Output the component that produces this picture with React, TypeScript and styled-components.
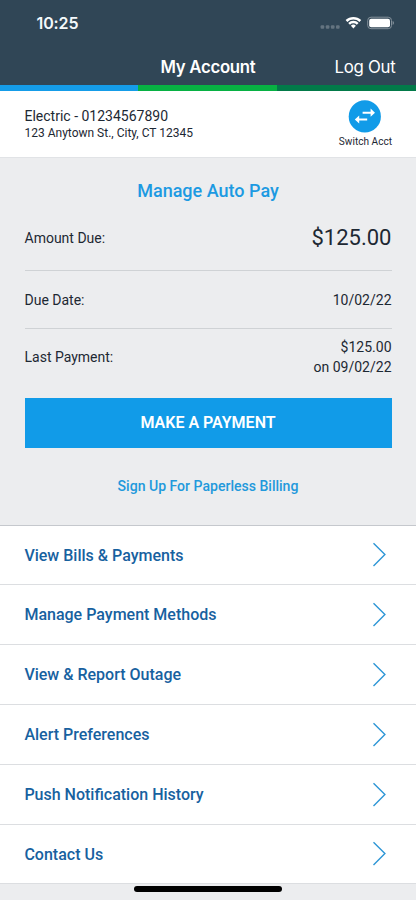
import React from "react";
import styled, { createGlobalStyle } from "styled-components";

const GlobalStyle = createGlobalStyle`
  * { box-sizing: border-box; }
  body {
    margin: 0;
    background: #ecedef;
    font-family: Roboto, "Liberation Sans", sans-serif;
    color: #1d2833;
  }
  button { font: inherit; border: 0; padding: 0; background: none; cursor: pointer; }
`;

const Screen = styled.div`
  width: 100%;
  height: 900px;
  display: flex;
  flex-direction: column;
  overflow: hidden;
  background: #ecedef;
`;

const Header = styled.header`
  flex: none;
  height: 85px;
  background: #304656;
  color: #fff;
  font-family: Inter, sans-serif;
`;

const StatusBar = styled.div`
  height: 46px;
  padding: 0 22px 0 36.5px;
  display: flex;
  align-items: center;
  justify-content: space-between;
`;

const Clock = styled.span`
  font-size: 16px;
  font-weight: 600;
  letter-spacing: -0.1px;
  color: #f4f9fc;
`;

const NavBar = styled.div`
  height: 42px;
  padding: 0 20.5px;
  display: grid;
  grid-template-columns: 1fr auto 1fr;
  align-items: center;
`;

const NavTitle = styled.h1`
  grid-column: 2;
  margin: 0;
  font-size: 16.8px;
  font-weight: 600;
  letter-spacing: -0.3px;
`;

const LogOut = styled.button`
  justify-self: end;
  color: #fff;
  font-size: 16.8px;
  letter-spacing: -0.25px;
`;

const Stripe = styled.div`
  flex: none;
  height: 6px;
  display: grid;
  grid-template-columns: 138.4px 138.6px 1fr;
`;

const StripePart = styled.span<{ $color: string }>`
  background: ${(p) => p.$color};
`;

const Account = styled.section`
  flex: none;
  height: 67px;
  padding: 9px 24px 0 24.5px;
  display: flex;
  justify-content: space-between;
  background: #fff;
  border-bottom: 1px solid #e1e3e6;
`;

const AccountInfo = styled.div`
  padding-top: 7px;
`;

const AccountNumber = styled.div`
  font-size: 14px;
  line-height: 18px;
`;

const Address = styled.div`
  font-size: 12px;
  line-height: 16px;
`;

const SwitchAccount = styled.button`
  display: flex;
  flex-direction: column;
  align-items: center;
  align-self: flex-start;
  color: #1d2833;
  font-size: 10.1px;
  line-height: 12px;
  gap: 1.5px;
`;

const Summary = styled.section`
  flex: none;
  height: 367px;
  padding: 0 24.5px;
  display: flex;
  flex-direction: column;
`;

const AutoPay = styled.button`
  height: 46px;
  margin-bottom: 1px;
  padding-top: 19px;
  line-height: 26px;
  color: #1c9ae2;
  font-size: 18px;
  font-weight: 500;
`;

const Row = styled.div<{ $height: number; $last?: boolean }>`
  height: ${(p) => p.$height}px;
  display: flex;
  align-items: center;
  justify-content: space-between;
  font-size: 14px;
  border-bottom: ${(p) => (p.$last ? "0" : "1px solid #cfd2d5")};
`;

const Value = styled.span<{ $large?: boolean }>`
  text-align: right;
  font-size: ${(p) => (p.$large ? "22px" : "14px")};
  line-height: ${(p) => (p.$large ? "26px" : "20px")};
`;

const PayButton = styled.button`
  flex: none;
  height: 50px;
  margin-top: 13px;
  padding-bottom: 1px;
  background: #119be8;
  color: #fff;
  font-size: 16px;
  font-weight: 600;
`;

const Paperless = styled.button`
  margin-top: 28px;
  line-height: 20px;
  align-self: center;
  color: #2299dc;
  font-size: 14.05px;
  font-weight: 500;
`;

const Menu = styled.nav`
  flex: none;
  background: #fff;
  border-top: 1px solid #c5c8cd;
`;

const MenuItem = styled.button`
  width: 100%;
  height: 60px;
  padding: 0 30px 0 24.4px;
  display: flex;
  align-items: center;
  justify-content: space-between;
  color: #17619f;
  font-size: 16px;
  font-weight: 500;
  border-bottom: 1px solid #dcdee1;

  &:first-child,
  &:last-child {
    height: 59px;
  }
`;

const Footer = styled.footer`
  flex: 1;
  display: flex;
  justify-content: center;
  padding-top: 2.4px;
`;

const HomeIndicator = styled.div`
  width: 148px;
  height: 5.2px;
  border-radius: 3px;
  background: #000;
`;

const StatusIcons = () => (
  <svg width="76" height="16" viewBox="0 0 76 16" fill="#fff">
    <g fill="#647480">
      <rect x="2.6" y="10.2" width="3.6" height="3.6" rx="1" />
      <rect x="7.8" y="10.2" width="3.6" height="3.6" rx="1" />
      <rect x="12.9" y="10.2" width="3.6" height="3.6" rx="1" />
      <rect x="18" y="10.2" width="3.6" height="3.6" rx="1" />
    </g>
    <g transform="translate(27.4 1.4)">
      <path d="M.2 3.7a11.2 11.2 0 0 1 15.6 0L14.1 5.6a8.8 8.8 0 0 0-12.2 0Z" />
      <path d="M2.8 6.5a7.4 7.4 0 0 1 10.4 0L11.4 8.3a4.9 4.9 0 0 0-6.8 0Z" />
      <path d="M5.5 9.3a3.6 3.6 0 0 1 5 0L8 12.1Z" />
    </g>
    <rect x="49.7" y="2.2" width="23.8" height="11.5" rx="3.3" fill="none" stroke="#83909a" strokeWidth="1" />
    <rect x="51.2" y="3.7" width="20.8" height="8.5" rx="2" />
    <path d="M74.6 6.1c1.8.5 1.8 3.3 0 3.8Z" fill="#83909a" />
  </svg>
);

const SwitchIcon = () => (
  <svg width="34" height="34" viewBox="0 0 34 34">
    <circle cx="16.8" cy="16.4" r="16.1" fill="#119be8" />
    <g fill="#fff">
      <path d="M14.6 11.7h8V8.6L27 12.7l-4.4 4.1V13.7h-8Z" />
      <path d="M19.2 18.5h-8v-3.1L6.8 19.5l4.4 4.1V20.5h8Z" />
    </g>
  </svg>
);

const Chevron = () => (
  <svg width="14" height="26" viewBox="0 0 14 26" fill="none" stroke="#2d96d6" strokeWidth="1.4">
    <path d="M1.5 1.3 12.9 12.6 1.5 23.9" />
  </svg>
);

const menuItems = [
  "View Bills & Payments",
  "Manage Payment Methods",
  "View & Report Outage",
  "Alert Preferences",
  "Push Notification History",
  "Contact Us",
];

export default function App() {
  return (
    <>
      <GlobalStyle />
      <Screen>
        <Header>
          <StatusBar>
            <Clock>10:25</Clock>
            <StatusIcons />
          </StatusBar>
          <NavBar>
            <NavTitle>My Account</NavTitle>
            <LogOut>Log Out</LogOut>
          </NavBar>
        </Header>
        <Stripe>
          <StripePart $color="#159ce8" />
          <StripePart $color="#07b143" />
          <StripePart $color="#027a49" />
        </Stripe>
        <Account>
          <AccountInfo>
            <AccountNumber>Electric - 01234567890</AccountNumber>
            <Address>123 Anytown St., City, CT 12345</Address>
          </AccountInfo>
          <SwitchAccount>
            <SwitchIcon />
            Switch Acct
          </SwitchAccount>
        </Account>
        <Summary>
          <AutoPay>Manage Auto Pay</AutoPay>
          <Row $height={66}>
            <span>Amount Due:</span>
            <Value $large>$125.00</Value>
          </Row>
          <Row $height={58}>
            <span>Due Date:</span>
            <Value>10/02/22</Value>
          </Row>
          <Row $height={56} $last>
            <span>Last Payment:</span>
            <Value>
              $125.00
              <br />
              on 09/02/22
            </Value>
          </Row>
          <PayButton>MAKE A PAYMENT</PayButton>
          <Paperless>Sign Up For Paperless Billing</Paperless>
        </Summary>
        <Menu>
          {menuItems.map((label) => (
            <MenuItem key={label}>
              {label}
              <Chevron />
            </MenuItem>
          ))}
        </Menu>
        <Footer>
          <HomeIndicator />
        </Footer>
      </Screen>
    </>
  );
}
